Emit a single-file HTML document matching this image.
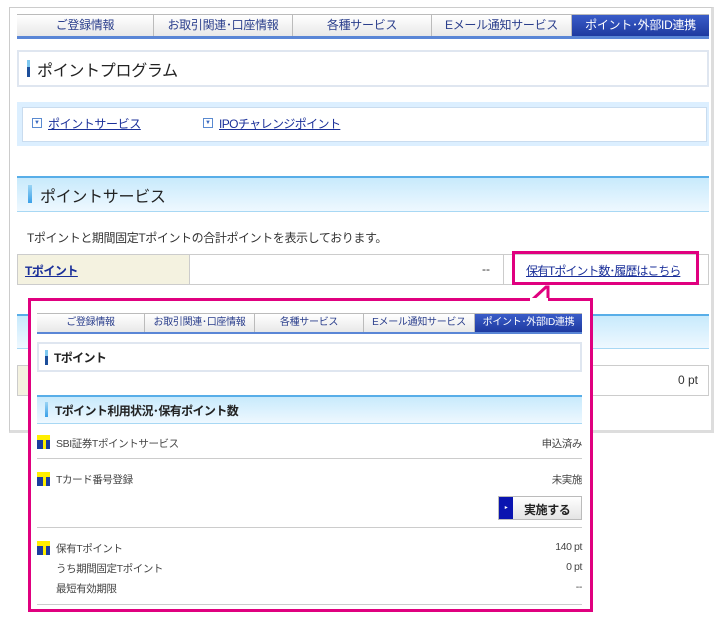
<!DOCTYPE html>
<html><head><meta charset="utf-8"><style>
*{margin:0;padding:0;box-sizing:border-box}
body{width:721px;height:622px;background:#fff;position:relative;overflow:hidden;font-family:"Liberation Sans","Noto Sans CJK JP",sans-serif;font-size:12px;color:#333}
.a{position:absolute}
.tab{position:absolute;text-align:center;background:linear-gradient(#fff,#e8e8e8);color:#2a3e8c;border-right:1px solid #bbb;letter-spacing:-0.3px}
.tab.on{background:linear-gradient(#3a5cc8,#1e3aa0);color:#fff}
a{color:#1a2f99;text-decoration:underline}
.tico{position:absolute;width:13px;height:14px;background:#ffee00}
.tico:before,.tico:after{content:"";position:absolute;bottom:0;height:9px;background:#1c3d9e}
.tico:before{left:0;width:6px}.tico:after{right:0;width:4px}
.r{position:absolute;right:139px;text-align:right}
.s{font-size:10.5px;letter-spacing:-0.4px;color:#444}
</style></head><body>
<div class="a" style="left:9px;top:7px;width:705px;height:426px;border:1px solid #ccc;border-right:3px solid #ddd;border-bottom:3px solid #ddd;background:#fff"></div>
<div class="a" style="left:17px;top:14px;width:692px;height:25px;border-top:1px solid #bbb;border-bottom:3px solid #5a86d6"></div>
<div class="tab" style="left:17px;top:15px;width:137px;height:21px;line-height:21px">ご登録情報</div>
<div class="tab" style="left:154px;top:15px;width:139px;height:21px;line-height:21px">お取引関連･口座情報</div>
<div class="tab" style="left:293px;top:15px;width:139px;height:21px;line-height:21px">各種サービス</div>
<div class="tab" style="left:432px;top:15px;width:140px;height:21px;line-height:21px">Eメール通知サービス</div>
<div class="tab on" style="left:572px;top:15px;width:137px;height:21px;line-height:21px;border:0">ポイント･外部ID連携</div>
<div class="a" style="left:17px;top:50px;width:692px;height:37px;border:2px solid #dfe6f0"></div>
<div class="a" style="left:27px;top:60px;width:3px;height:17px;background:linear-gradient(#7ec8f0 40%,#1c4e9a 40%)"></div>
<div class="a" style="left:37px;top:57px;font-size:16px;color:#222;letter-spacing:-0.3px">ポイントプログラム</div>
<div class="a" style="left:17px;top:102px;width:692px;height:44px;background:#dcefff"></div>
<div class="a" style="left:22px;top:107px;width:685px;height:35px;background:#fff;border:1px solid #c9dcef"></div>
<div class="a" style="left:32px;top:118px;width:10px;height:10px;border:1px solid #5a8ad0;font-size:6px;color:#3a6ac0;text-align:center;line-height:8px">▼</div>
<div class="a" style="left:48px;top:115px;letter-spacing:-0.4px"><a>ポイントサービス</a></div>
<div class="a" style="left:203px;top:118px;width:10px;height:10px;border:1px solid #5a8ad0;font-size:6px;color:#3a6ac0;text-align:center;line-height:8px">▼</div>
<div class="a" style="left:219px;top:115px;letter-spacing:-0.6px"><a>IPOチャレンジポイント</a></div>
<div class="a" style="left:17px;top:176px;width:692px;height:36px;border-top:2px solid #58aee8;border-bottom:1px solid #a8d8f4;background:linear-gradient(#c8eafc,#eef8ff)"></div>
<div class="a" style="left:28px;top:185px;width:4px;height:18px;background:linear-gradient(#9ad4f4,#3aa0e8)"></div>
<div class="a" style="left:40px;top:183px;font-size:16px;color:#222;letter-spacing:-0.3px">ポイントサービス</div>
<div class="a" style="left:27px;top:229px;letter-spacing:-0.4px">Tポイントと期間固定Tポイントの合計ポイントを表示しております。</div>
<div class="a" style="left:17px;top:254px;width:692px;height:31px;border:1px solid #ccc"></div>
<div class="a" style="left:18px;top:255px;width:172px;height:29px;background:#f4f2e0;border-right:1px solid #ccc"></div>
<div class="a" style="left:503px;top:255px;width:1px;height:29px;background:#ccc"></div>
<div class="a" style="left:25px;top:262px;font-weight:bold;letter-spacing:-0.5px"><a>Tポイント</a></div>
<div class="a" style="left:482px;top:262px">--</div>
<div class="a" style="left:526px;top:262px;letter-spacing:-1px"><a>保有Tポイント数･履歴はこちら</a></div>
<div class="a" style="left:512px;top:251px;width:187px;height:34px;border:3px solid #e0007f"></div>
<div class="a" style="left:17px;top:314px;width:692px;height:35px;border-top:2px solid #58aee8;border-bottom:1px solid #a8d8f4;background:linear-gradient(#c8eafc,#eef8ff)"></div>
<div class="a" style="left:17px;top:365px;width:692px;height:31px;border:1px solid #ccc"></div>
<div class="a" style="left:18px;top:366px;width:12px;height:29px;background:#f4f2e0"></div>
<div class="a" style="left:678px;top:373px">0 pt</div>
<div class="a" style="left:28px;top:298px;width:565px;height:314px;border:3px solid #e0007f;background:#fff"></div>
<svg class="a" style="left:528px;top:284px" width="26" height="20"><polygon points="6,16 18,4 20,4 20,16" fill="#fff"/><polyline points="4,16 18,3 20,3 20,16" fill="none" stroke="#e0007f" stroke-width="3"/></svg>
<div class="a" style="left:530px;top:298px;width:18px;height:4px;background:#fff"></div>
<div style="font-size:10px">
<div class="a" style="left:37px;top:313px;width:545px;height:21px;border-top:1px solid #bbb;border-bottom:2px solid #5a86d6"></div>
<div class="tab" style="left:37px;top:314px;width:108px;height:18px;line-height:18px">ご登録情報</div>
<div class="tab" style="left:145px;top:314px;width:110px;height:18px;line-height:18px">お取引関連･口座情報</div>
<div class="tab" style="left:255px;top:314px;width:109px;height:18px;line-height:18px">各種サービス</div>
<div class="tab" style="left:364px;top:314px;width:111px;height:18px;line-height:18px">Eメール通知サービス</div>
<div class="tab on" style="left:475px;top:314px;width:107px;height:18px;line-height:18px;border:0">ポイント･外部ID連携</div>
</div>
<div class="a" style="left:37px;top:342px;width:545px;height:30px;border:2px solid #dfe6f0"></div>
<div class="a" style="left:45px;top:350px;width:3px;height:15px;background:linear-gradient(#7ec8f0 40%,#1c4e9a 40%)"></div>
<div class="a" style="left:54px;top:349px;font-size:12px;color:#222;font-weight:bold;letter-spacing:-0.6px">Tポイント</div>
<div class="a" style="left:37px;top:395px;width:545px;height:29px;border-top:2px solid #58aee8;border-bottom:1px solid #a8d8f4;background:linear-gradient(#c8eafc,#eef8ff)"></div>
<div class="a" style="left:45px;top:402px;width:3px;height:15px;background:linear-gradient(#9ad4f4,#3aa0e8)"></div>
<div class="a" style="left:55px;top:402px;font-size:12px;color:#222;font-weight:bold;letter-spacing:-0.6px">Tポイント利用状況･保有ポイント数</div>
<div class="s">
<div class="tico" style="left:37px;top:435px"></div>
<div class="a" style="left:56px;top:436px">SBI証券Tポイントサービス</div>
<div class="r" style="top:436px">申込済み</div>
<div class="a" style="left:37px;top:458px;width:545px;height:1px;background:#ccc"></div>
<div class="tico" style="left:37px;top:472px"></div>
<div class="a" style="left:56px;top:472px">Tカード番号登録</div>
<div class="r" style="top:472px">未実施</div>
<div class="a" style="left:498px;top:496px;width:84px;height:24px;border:1px solid #bbb;background:linear-gradient(#fff,#e4e4e4)"></div>
<div class="a" style="left:499px;top:497px;width:14px;height:22px;background:#0a14b0;color:#fff;font-size:6px;line-height:22px;text-align:center">▸</div>
<div class="a" style="left:524px;top:501px;font-weight:bold;color:#222;font-size:12px">実施する</div>
<div class="a" style="left:37px;top:527px;width:545px;height:1px;background:#ccc"></div>
<div class="tico" style="left:37px;top:541px"></div>
<div class="a" style="left:56px;top:541px">保有Tポイント</div>
<div class="r" style="top:541px">140 pt</div>
<div class="a" style="left:56px;top:561px">うち期間固定Tポイント</div>
<div class="r" style="top:561px">0 pt</div>
<div class="a" style="left:56px;top:581px">最短有効期限</div>
<div class="r" style="top:581px">--</div>
<div class="a" style="left:37px;top:604px;width:545px;height:1px;background:#ccc"></div>
</div>
</body></html>
